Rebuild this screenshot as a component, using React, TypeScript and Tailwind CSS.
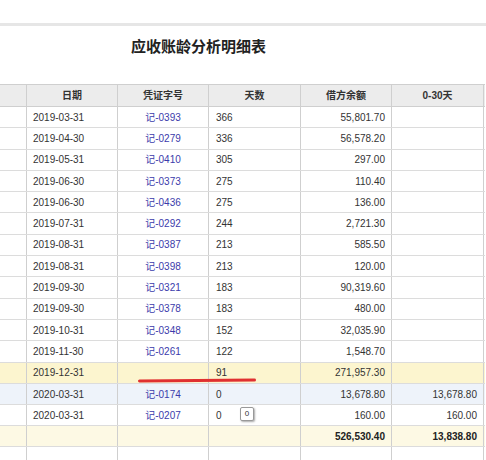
import React from "react";

const rows: [string, string, string, string, string, string][] = [
  ["", "2019-03-31", "记-0393", "366", "55,801.70", ""],
  ["", "2019-04-30", "记-0279", "336", "56,578.20", ""],
  ["", "2019-05-31", "记-0410", "305", "297.00", ""],
  ["", "2019-06-30", "记-0373", "275", "110.40", ""],
  ["", "2019-06-30", "记-0436", "275", "136.00", ""],
  ["", "2019-07-31", "记-0292", "244", "2,721.30", ""],
  ["", "2019-08-31", "记-0387", "213", "585.50", ""],
  ["", "2019-08-31", "记-0398", "213", "120.00", ""],
  ["", "2019-09-30", "记-0321", "183", "90,319.60", ""],
  ["", "2019-09-30", "记-0378", "183", "480.00", ""],
  ["", "2019-10-31", "记-0348", "152", "32,035.90", ""],
  ["", "2019-11-30", "记-0261", "122", "1,548.70", ""],
  ["", "2019-12-31", "", "91", "271,957.30", ""],
  ["", "2020-03-31", "记-0174", "0", "13,678.80", "13,678.80"],
  ["", "2020-03-31", "记-0207", "0", "160.00", "160.00"],
];

const W = ["w-[27px]", "w-[91px]", "w-[91px]", "w-[92px]", "w-[91px]", "w-[92px]"];

export default function App() {
  return (
    <div className="w-[486px] h-[460px] overflow-hidden bg-white relative" style={{ fontFamily: '"Liberation Sans", "Noto Sans CJK SC", sans-serif' }}>
      <div className="h-[23px]" />
      <div className="h-[3px] bg-[#e6e6e6]" />
      <div className="h-[58px] flex items-start">
        <div className="ml-[131px] mt-[10px] text-[15px] font-bold text-[#222]">应收账龄分析明细表</div>
      </div>
      <div className="border-t border-[#cfcfcf] w-[485px]">
        <div className="flex h-[22px] bg-[#ececec] border-b border-[#cfcfcf] text-[10px] font-bold text-[#333]">
          {["", "日期", "凭证字号", "天数", "借方余额", "0-30天"].map((h, i) => (
            <div key={i} className={`${W[i]} border-r border-[#cfcfcf] flex items-center justify-center`}>{h}</div>
          ))}
        </div>
        {rows.map((r, ri) => {
          const bg = ri === 12 ? "bg-[#fcf5cf]" : ri === 13 ? "bg-[#eef3fa]" : "bg-white";
          return (
            <div key={ri} className={`flex h-[21.3px] ${bg} border-b border-[#dcdcdc] text-[10px] text-[#333]`}>
              <div className={`${W[0]} border-r border-[#cfcfcf]`} />
              <div className={`${W[1]} border-r border-[#cfcfcf] flex items-center pl-[6px]`}>{r[1]}</div>
              <div className={`${W[2]} border-r border-[#cfcfcf] flex items-center justify-center text-[#3b3bab]`}>{r[2]}</div>
              <div className={`${W[3]} border-r border-[#cfcfcf] flex items-center pl-[7px] relative`}>
                {r[3]}
                {ri === 14 && (
                  <div className="absolute left-[31px] top-[2px] w-[14px] h-[14px] border border-[#999] rounded-[2px] bg-white text-[8px] flex items-center justify-center shadow-[1px_1px_2px_#aaa]">0</div>
                )}
              </div>
              <div className={`${W[4]} border-r border-[#cfcfcf] flex items-center justify-end pr-[6px]`}>{r[4]}</div>
              <div className={`${W[5]} border-r border-[#cfcfcf] flex items-center justify-end pr-[6px]`}>{r[5]}</div>
            </div>
          );
        })}
        <div className="flex h-[21px] bg-[#fdf9e4] border-b border-[#dcdcdc] text-[10px] font-bold text-[#222]">
          {["", "", "", "", "526,530.40", "13,838.80"].map((c, i) => (
            <div key={i} className={`${W[i]} border-r border-[#cfcfcf] flex items-center justify-end pr-[6px]`}>{c}</div>
          ))}
        </div>
        <div className="flex h-[30px]">
          {W.map((w, i) => (
            <div key={i} className={`${w} border-r border-[#cfcfcf]`} />
          ))}
        </div>
      </div>
      <div className="absolute left-[138px] top-[379px] w-[118px] h-[3px] rounded-full bg-[#e03030] -rotate-[0.5deg]" />
    </div>
  );
}
